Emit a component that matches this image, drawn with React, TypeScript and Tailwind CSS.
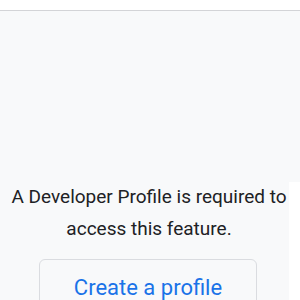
export default function App() {
  return (
    <div className="w-[300px] h-[300px] overflow-hidden bg-white flex flex-col" style={{ fontFamily: "Roboto, 'Noto Sans', sans-serif" }}>
      <div className="h-[10px] bg-white border-b border-[#d3d4d7] shrink-0 box-content" />
      <div className="flex flex-1">
        <div className="w-[289px] bg-[#f8f9fa] flex flex-col items-start pt-[170px]">
          <p className="w-[298px] shrink-0 text-center text-[19px] leading-[32px] text-[#202124]">
            A Developer Profile is required to access this feature.
          </p>
          <div className="w-[296px] shrink-0 flex justify-center mt-[14px]">
            <button className="w-[218px] h-[60px] border border-[#dadce0] rounded-[6px] bg-[#f8f9fa] text-[#1a73e8] text-[22px] flex justify-center items-start pt-[11px]">
              Create a profile
            </button>
          </div>
        </div>
        <div className="flex-1 flex flex-col">
          <div className="h-[171px] bg-[#f8f9fa]" />
          <div className="flex-1 bg-white" />
        </div>
      </div>
    </div>
  );
}
